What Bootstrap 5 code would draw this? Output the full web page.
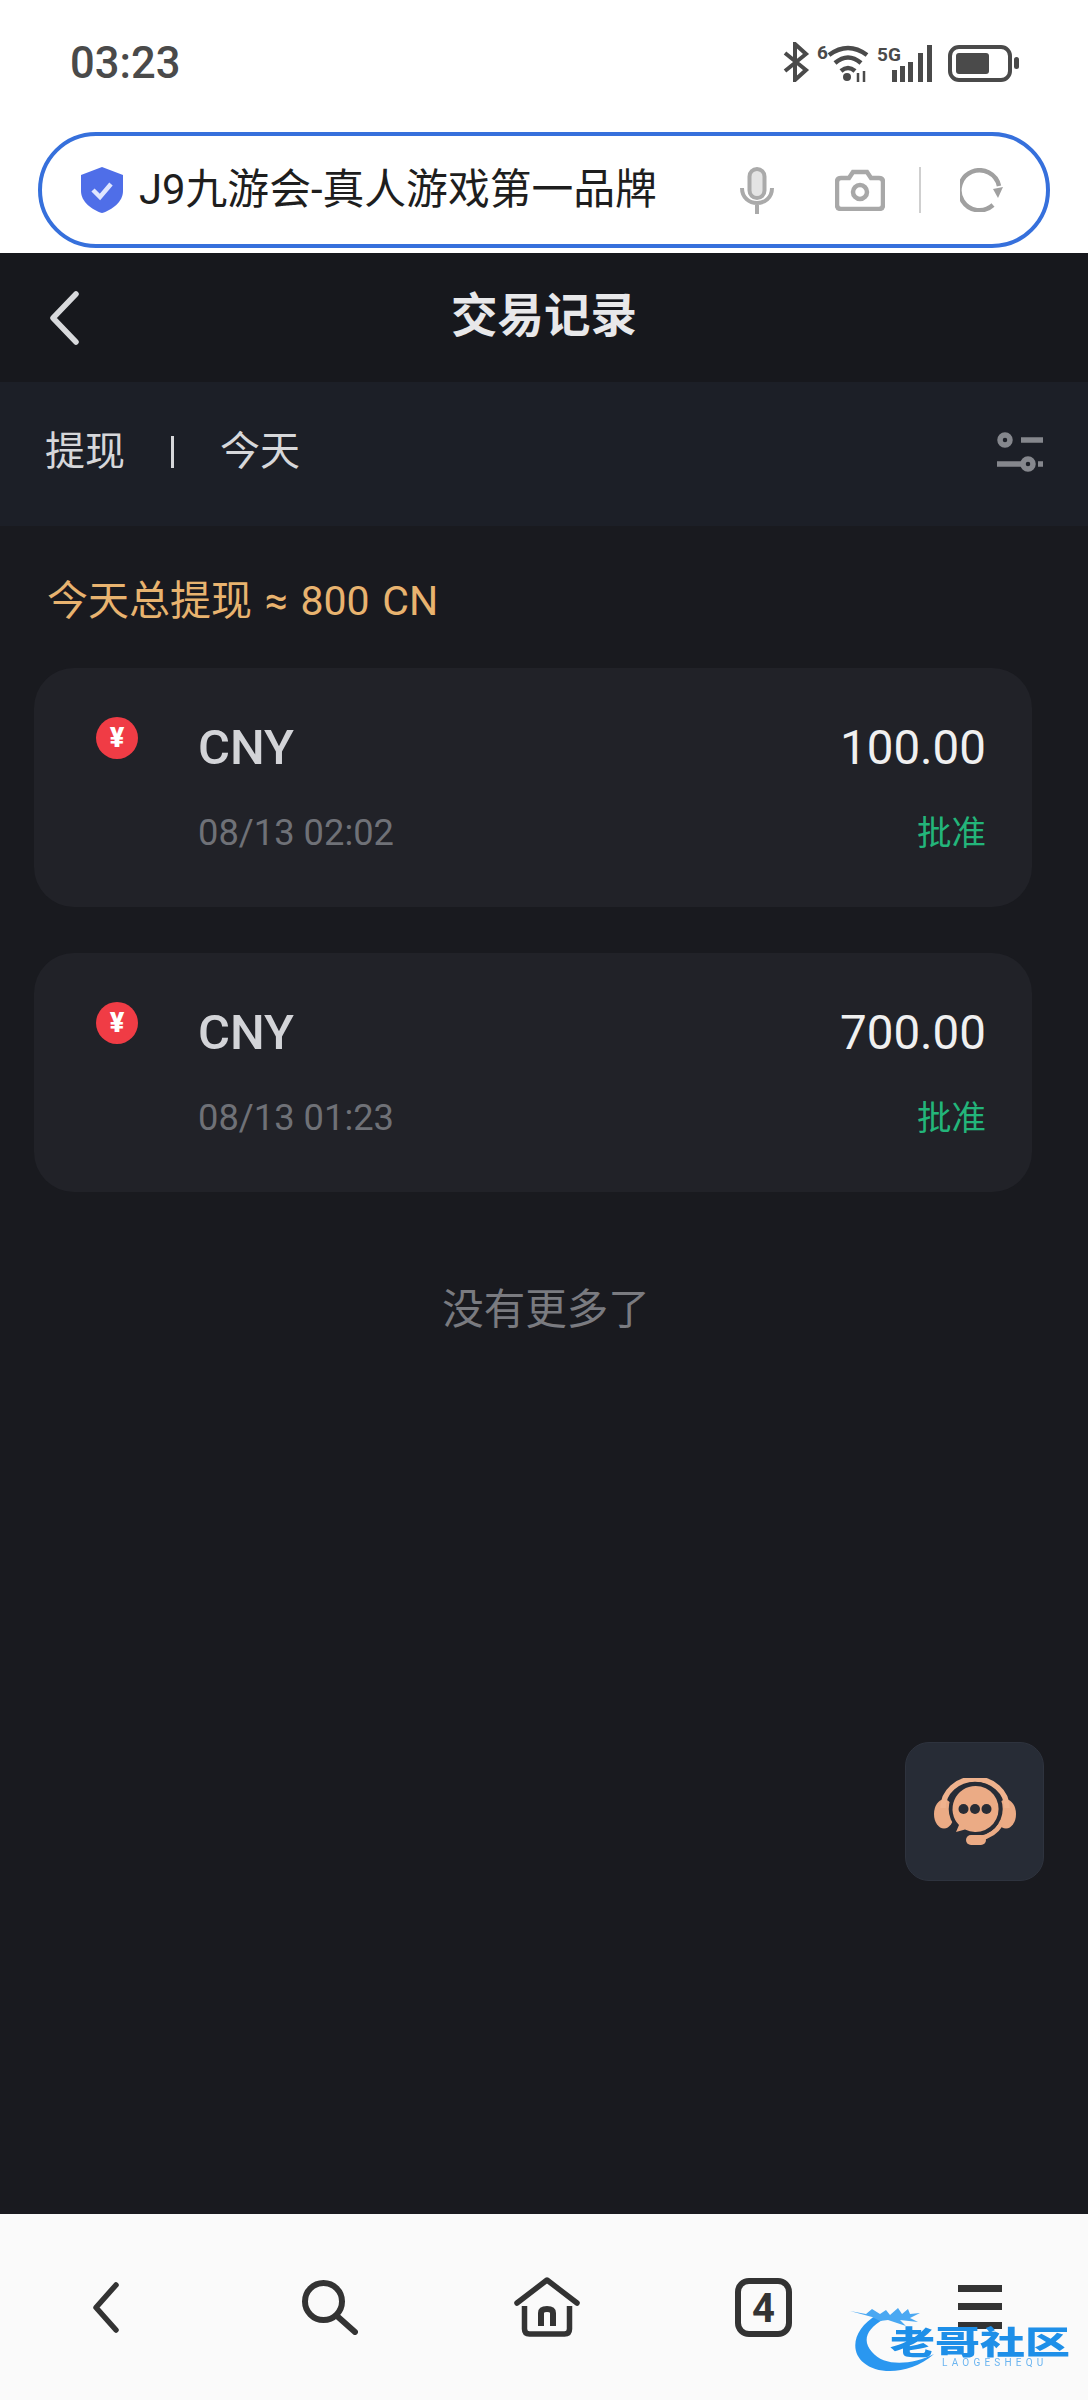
<!DOCTYPE html>
<html lang="zh">
<head>
  <meta charset="UTF-8" />
  <title>交易记录</title>
  <link href="https://cdn.jsdelivr.net/npm/bootstrap@5.3.3/dist/css/bootstrap.min.css" rel="stylesheet" />
  <style>
    html, body { height: 2400px; margin: 0; background: #191a1f; }
    body { font-family: "Roboto", "Noto Sans CJK SC", sans-serif; overflow: hidden; }
    .phone { width: 1088px; height: 2400px; position: relative; }

    /* status bar + address bar */
    .browser-top { height: 253px; background: #fff; }
    .status-row { height: 132px; padding: 0 68px 8px 70px; }
    .clock { font-size: 43.5px; font-weight: 500; color: #4a4a4a; margin-top: 3px; }
    .addr-box { height: 116px; margin: 0 38px; border: 4px solid #3670dc; border-radius: 58px; padding: 0 43px 0 38px; }
    .addr-title { font-size: 41.8px; color: #1e1e1e; margin-left: 15px; white-space: nowrap; }
    .addr-mic { margin-right: 61px; }
    .addr-cam { margin-right: 34px; }
    .addr-sep { width: 2px; height: 46px; background: #cfcfcf; margin-right: 39px; }

    /* page */
    .page-head { height: 129px; background: #17181d; padding-bottom: 1px; }
    .page-back { position: absolute; left: 47px; top: 291px; }
    .page-title { font-size: 46.5px; font-weight: 700; color: #e8e8ea; }
    .filter-row { height: 144px; background: #1c1f27; padding: 0 45px 4px 45px; }
    .filter-text { font-size: 40px; color: #d6d7da; }
    .filter-bar { width: 3px; height: 32px; background: #d6d7da; margin: 0 46px; }
    .total-line { font-size: 41px; word-spacing: 2.5px; color: #e8b36f; padding-top: 49px; padding-left: 47px; height: 142px; line-height: 52px; }

    .rec-card { height: 239px; margin: 0 56px 46px 34px; background: #212228; border-radius: 40px; padding: 52px 46px 0 62px; border: 0; }
    .yen-dot { width: 42px; height: 42px; border-radius: 50%; background: #f03c45; color: #fff; font-size: 27px; font-weight: 900; line-height: 42px; text-align: center; margin-top: -3px; }
    .rec-name { font-size: 49px; font-weight: 500; color: #d3d4d8; line-height: 56px; margin-left: 60px; }
    .rec-amt { font-size: 47.5px; color: #f0f0f0; line-height: 56px; }
    .rec-date { font-size: 36.3px; color: #6f7177; line-height: 44px; margin-left: 102px; margin-top: 35px; }
    .rec-state { font-size: 34.5px; color: #23b57a; line-height: 44px; margin-top: 35px; }
    .no-more { font-size: 41.5px; color: #7a7b80; text-align: center; margin-top: 87px; padding-left: 4px; }

    .help-btn { position: absolute; left: 905px; top: 1742px; width: 139px; height: 139px; border-radius: 24px; background: #272c36; border: 1px solid #2e333e; }

    /* bottom browser bar */
    .browser-nav { position: absolute; left: 0; right: 0; top: 2214px; height: 186px; background: #fafafa; }
    .nav-back { margin-left: 92px; }
    .nav-search { margin-left: 183px; }
    .nav-home { margin-left: 156px; }
    .nav-tabs-ico { margin-left: 155px; }
    .nav-menu { margin-left: 166px; }
    .watermark { position: absolute; left: 850px; top: 2305px; width: 226px; height: 70px; filter: blur(.5px); }
    .wm-text { position: absolute; left: 40px; top: 23px; font-size: 45px; line-height: 30px; font-weight: 900; color: #1e8fe8; white-space: nowrap; transform: scaleY(.72); transform-origin: 0 50%; }
    .wm-sub { position: absolute; left: 92px; top: 53px; font-size: 10px; line-height: 10px; letter-spacing: 4.2px; color: #6cb5f0; white-space: nowrap; }
  </style>
</head>
<body>
  <div class="phone">
    <div class="browser-top">
      <div class="status-row d-flex align-items-center justify-content-between">
        <span class="clock">03:23</span>
        <svg width="238" height="40" viewBox="0 0 238 40" fill="none">
          <path d="M3 11 L24 28 L13 38 V2 L24 12 L3 29" stroke="#4a4a4a" stroke-width="4"/>
          <text x="35" y="17" font-family="Roboto" font-size="19" font-weight="700" fill="#4a4a4a">6</text>
          <path d="M47 13 Q66 -1 85 13 M53 21 Q66 10 79 21 M59 29 Q66 23 73 29" stroke="#4a4a4a" stroke-width="4.5"/>
          <circle cx="65" cy="35" r="4" fill="#4a4a4a"/>
          <path d="M76 31 V40 M82 29 V40" stroke="#4a4a4a" stroke-width="2.5"/>
          <text x="95" y="19" font-family="Roboto" font-size="19" font-weight="700" fill="#4a4a4a">5G</text>
          <rect x="110" y="28" width="5" height="12" fill="#4a4a4a"/>
          <rect x="118" y="24" width="5" height="16" fill="#4a4a4a"/>
          <rect x="126" y="20" width="5" height="20" fill="#4a4a4a"/>
          <rect x="136" y="11" width="5" height="29" fill="#4a4a4a"/>
          <rect x="145" y="3" width="5" height="37" fill="#4a4a4a"/>
          <rect x="168" y="5" width="60" height="33" rx="9" stroke="#4a4a4a" stroke-width="4"/>
          <rect x="174" y="11" width="33" height="21" rx="3" fill="#4a4a4a"/>
          <rect x="232" y="15" width="5" height="12" rx="2.5" fill="#4a4a4a"/>
        </svg>
      </div>
      <div class="addr-box d-flex align-items-center">
        <svg width="44" height="48" viewBox="0 0 44 48"><path d="M22 1 L43 9 V25 C43 36 32 44 22 47 C12 44 1 36 1 25 V9 Z" fill="#4f6ee8"/><path d="M13 24 L20 31 L31 18" fill="none" stroke="#dfe6ff" stroke-width="4.5"/></svg>
        <span class="addr-title">J9九游会-真人游戏第一品牌</span>
        <div class="ms-auto d-flex align-items-center">
          <svg class="addr-mic" width="34" height="47" viewBox="0 0 34 47" fill="none" stroke="#aaa" stroke-width="4"><rect x="9.5" y="2" width="15" height="29" rx="7.5" fill="#e4e4e4"/><path d="M2 21 C2 41 32 41 32 21 M17 36 V47"/></svg>
          <svg class="addr-cam" width="50" height="42" viewBox="0 0 50 42" fill="none" stroke="#a8a8a8" stroke-width="4.5"><path d="M6 9 H14 L18 3 H32 L36 9 H44 Q48 9 48 13 V36 Q48 40 44 40 H6 Q2 40 2 36 V13 Q2 9 6 9 Z"/><circle cx="25" cy="23" r="7"/></svg>
          <div class="addr-sep"></div>
          <svg width="43" height="44" viewBox="0 0 43 44" fill="none"><path d="M33 37 A20 20 0 1 1 39 18" stroke="#a0a0a0" stroke-width="4.5"/><path d="M33 21 L43 19 L38 30 Z" fill="#a0a0a0"/></svg>
        </div>
      </div>
    </div>

    <div class="page-head d-flex align-items-center justify-content-center">
      <span class="page-title">交易记录</span>
    </div>
    <svg class="page-back" width="34" height="54" viewBox="0 0 34 54" fill="none"><path d="M29 3 L6 27 L29 51" stroke="#d8d9dc" stroke-width="5.5" stroke-linecap="round" stroke-linejoin="round"/></svg>

    <div class="filter-row d-flex align-items-center">
      <span class="filter-text">提现</span>
      <span class="filter-bar"></span>
      <span class="filter-text">今天</span>
      <svg class="ms-auto" width="46" height="40" viewBox="0 0 46 40" fill="none" stroke="#85878d" stroke-width="5.5">
        <circle cx="8" cy="8" r="5"/><path d="M24 8 H46"/>
        <circle cx="31" cy="32" r="5"/><path d="M0 32 H24 M41 32 H46"/>
      </svg>
    </div>

    <div class="total-line">今天总提现 ≈ 800 CN</div>

    <div class="card rec-card">
      <div class="d-flex align-items-start">
        <div class="yen-dot">¥</div>
        <div class="rec-name">CNY</div>
        <div class="rec-amt ms-auto">100.00</div>
      </div>
      <div class="d-flex justify-content-between">
        <div class="rec-date">08/13 02:02</div>
        <div class="rec-state">批准</div>
      </div>
    </div>
    <div class="card rec-card">
      <div class="d-flex align-items-start">
        <div class="yen-dot">¥</div>
        <div class="rec-name">CNY</div>
        <div class="rec-amt ms-auto">700.00</div>
      </div>
      <div class="d-flex justify-content-between">
        <div class="rec-date">08/13 01:23</div>
        <div class="rec-state">批准</div>
      </div>
    </div>

    <div class="no-more">没有更多了</div>

    <div class="help-btn d-flex align-items-center justify-content-center">
      <svg width="82" height="67" viewBox="0 0 82 67">
        <ellipse cx="10" cy="36" rx="10" ry="14.5" fill="#ebab85"/>
        <ellipse cx="72" cy="36" rx="10" ry="14.5" fill="#ebab85"/>
        <path d="M9 30 A32 29 0 0 1 73 30" fill="none" stroke="#efb28d" stroke-width="5.5"/>
        <path d="M67 46 A30 30 0 0 1 46 60" fill="none" stroke="#ebab85" stroke-width="5"/>
        <circle cx="41.7" cy="31" r="27" fill="#272c36"/>
        <path d="M41.7 8 A23 23 0 1 1 31 51.4 L22 54 L25 47 A23 23 0 0 1 41.7 8 Z" fill="#ebab85"/>
        <rect x="32" y="57" width="20" height="10" rx="5" fill="#ebab85"/>
        <circle cx="29.5" cy="31" r="5" fill="#282c35"/><circle cx="41" cy="31" r="5" fill="#282c35"/><circle cx="52.5" cy="31" r="5" fill="#282c35"/>
      </svg>
    </div>

    <div class="browser-nav d-flex align-items-center">
      <svg class="nav-back" width="27" height="51" viewBox="0 0 27 51" fill="none"><path d="M24 3 L4 25.5 L24 48" stroke="#333" stroke-width="5.5" stroke-linecap="round" stroke-linejoin="round"/></svg>
      <svg class="nav-search" width="56" height="55" viewBox="0 0 56 55" fill="none" stroke="#333" stroke-width="6"><circle cx="21.5" cy="21.5" r="18.5"/><path d="M35 36 L53 52" stroke-linecap="round"/></svg>
      <svg class="nav-home" width="66" height="60" viewBox="0 0 66 60" fill="none" stroke="#333" stroke-width="5.5"><path d="M3 26 L33 3 L63 26" stroke-linecap="round" stroke-linejoin="round"/><path d="M10.5 29 V52 Q10.5 57 15.5 57 H50.5 Q55.5 57 55.5 52 V29"/><path d="M27 49 V36 Q27 32 33 32 Q39 32 39 36 V49" stroke-width="6"/></svg>
      <svg class="nav-tabs-ico" width="57" height="59" viewBox="0 0 57 59" fill="none"><rect x="3" y="3" width="51" height="53" rx="11" stroke="#333" stroke-width="6"/><text x="28.5" y="44" text-anchor="middle" font-family="Roboto" font-weight="700" font-size="40" fill="#333">4</text></svg>
      <svg class="nav-menu" width="44" height="44" viewBox="0 0 44 44" fill="#333"><rect width="44" height="7"/><rect y="18" width="44" height="7"/><rect y="37" width="44" height="7"/></svg>
    </div>

    <div class="watermark">
      <svg class="position-absolute top-0 start-0" width="100" height="70" viewBox="0 0 100 70"><path d="M27 10 C5 22 -2 45 14 58 C28 70 60 70 84 49 C62 60 34 62 22 47 C12 36 16 24 34 14 Z" fill="#2a97f0"/><path d="M0 6 L16 9 L22 4 L30 9 L36 5 L40 10 L48 3 L52 9 L58 4 L60 9 L70 8 L60 13 L68 17 L50 15 L56 21 L38 15 L30 16 L22 12 Z" fill="#4aa8f2"/></svg>
      <span class="wm-text">老哥社区</span>
      <span class="wm-sub">LAOGESHEQU</span>
    </div>
  </div>
  <script src="https://cdn.jsdelivr.net/npm/bootstrap@5.3.3/dist/js/bootstrap.bundle.min.js"></script>
</body>
</html>
